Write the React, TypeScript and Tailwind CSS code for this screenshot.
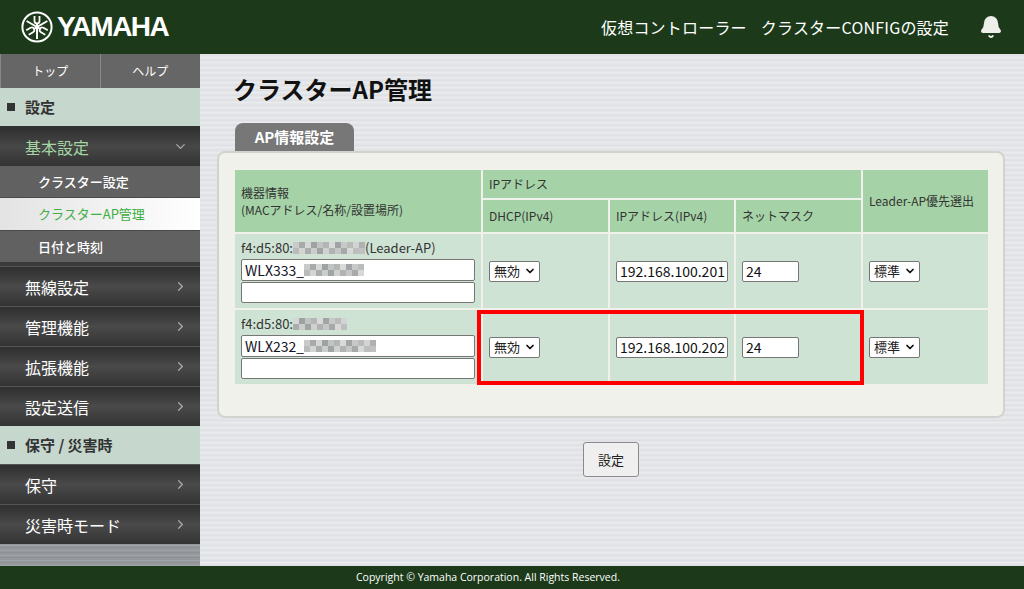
import { Bell, ChevronDown, ChevronRight } from "lucide-react";

const mosaicA = [
  "bg-[#c9cbca]", "bg-[#a7aaa9]", "bg-[#d6d6d4]", "bg-[#9da2a3]", "bg-[#c2c4c2]",
  "bg-[#b3b6b5]", "bg-[#d9dad8]", "bg-[#a0a4a6]", "bg-[#c7c9c8]", "bg-[#b9bcbb]",
  "bg-[#d2d3d2]", "bg-[#aeb1b0]",
];
const mosaicB = [
  "bg-[#b8bbba]", "bg-[#d4d5d3]", "bg-[#a9adad]", "bg-[#cbcdcc]", "bg-[#9fa4a5]",
  "bg-[#d0d1cf]", "bg-[#b0b3b2]", "bg-[#c5c7c6]", "bg-[#a5a9aa]", "bg-[#d8d9d7]",
  "bg-[#bcbfbe]", "bg-[#c0c2c1]",
];

function Mosaic({ n, offset = 0 }: { n: number; offset?: number }) {
  return (
    <span className="inline-flex flex-col align-middle">
      <span className="flex">
        {mosaicA.slice(offset, offset + n).map((c, i) => (
          <span key={i} className={`h-[6px] w-[6px] ${c}`} />
        ))}
      </span>
      <span className="flex">
        {mosaicB.slice(offset, offset + n).map((c, i) => (
          <span key={i} className={`h-[6px] w-[6px] ${c}`} />
        ))}
      </span>
    </span>
  );
}

function Logo() {
  const fork = (
    <g>
      <line x1="16" y1="16" x2="16" y2="28" stroke="white" strokeWidth="2" />
      <path d="M13.5 5 V10 Q13.5 12.5 16 12.5 Q18.5 12.5 18.5 10 V5" fill="none" stroke="white" strokeWidth="1.8" />
      <line x1="16" y1="12.5" x2="16" y2="16" stroke="white" strokeWidth="2" />
    </g>
  );
  return (
    <svg width="32" height="32" viewBox="0 0 32 32">
      <circle cx="16" cy="16" r="14.6" fill="none" stroke="white" strokeWidth="2" />
      {fork}
      <g transform="rotate(120 16 16)">{fork}</g>
      <g transform="rotate(240 16 16)">{fork}</g>
      <circle cx="16" cy="16" r="2" fill="white" />
    </svg>
  );
}

function MenuItem({ label }: { label: string }) {
  return (
    <div className="flex h-[40px] items-center justify-between border-t border-[#555] bg-gradient-to-b from-[#2f2f2f] via-[#4a4a4a] to-[#333] pl-[25px] pr-[12px] text-[16px] text-white">
      <span>{label}</span>
      <ChevronRight size={15} className="text-[#a8a8a8]" />
    </div>
  );
}

function Section({ label }: { label: string }) {
  return (
    <div className="flex h-[38px] items-center gap-[10px] bg-[#c6d7cd] pl-[7px] text-[15px] font-bold text-[#333]">
      <span className="h-[8px] w-[8px] bg-[#333]" />
      <span>{label}</span>
    </div>
  );
}

function Select({ label }: { label: string }) {
  return (
    <div className="inline-flex h-[21px] w-[51px] items-center justify-between rounded-[2px] border border-[#767676] bg-white pl-[4px] pr-[3px] text-[13px] text-[#222]">
      <span>{label}</span>
      <ChevronDown size={12} strokeWidth={3.5} className="text-[#111]" />
    </div>
  );
}

function TextBox({ w, children }: { w: string; children?: React.ReactNode }) {
  return (
    <div className={`flex h-[21px] items-center rounded-[2px] border border-[#767676] bg-white px-[3px] text-[14px] leading-none text-[#111] ${w}`}>
      {children}
    </div>
  );
}

function ApRow({ model, leader, mac }: { model: string; leader?: boolean; mac: number }) {
  return (
    <>
      <div className="bg-[#cfe3d5] px-[6px] pt-[6px]">
        <div className="flex h-[16px] items-center text-[13px] text-[#333]">
          <span>f4:d5:80:</span>
          <Mosaic n={mac} offset={leader ? 0 : 2} />
          {leader && <span>(Leader-AP)</span>}
        </div>
        <div className="mt-[3px] flex flex-col gap-[1px]">
          <div className="flex h-[22px] items-center rounded-[2px] border border-[#767676] bg-white px-[3px] text-[14px] text-[#112]">
            <span>{model}_</span>
            <Mosaic n={leader ? 10 : 12} offset={0} />
          </div>
          <TextBox w="w-full" />
        </div>
      </div>
      <div className="flex items-center bg-[#cfe3d5] px-[6px]">
        <Select label="無効" />
      </div>
      <div className="flex items-center bg-[#cfe3d5] px-[6px]">
        <TextBox w="w-[112px]">{leader ? "192.168.100.201" : "192.168.100.202"}</TextBox>
      </div>
      <div className="flex items-center bg-[#cfe3d5] px-[6px]">
        <TextBox w="w-[57px]">24</TextBox>
      </div>
      <div className="flex items-center bg-[#cfe3d5] px-[6px]">
        <Select label="標準" />
      </div>
    </>
  );
}

export default function App() {
  return (
    <div className="flex h-[589px] w-[1024px] flex-col overflow-hidden font-['Noto_Sans_CJK_JP','Noto_Sans',sans-serif]">
      {/* header */}
      <header className="flex h-[54px] shrink-0 items-center bg-[#1c3a1a] pl-[21px] pr-[21px] text-white">
        <div className="flex items-center gap-[4px]">
          <Logo />
          <span className="font-['Liberation_Sans',sans-serif] text-[28px] font-bold tracking-[-1.5px]">YAMAHA</span>
        </div>
        <nav className="ml-auto flex items-center gap-[14px] text-[16px] tracking-[0.2px]">
          <span>仮想コントローラー</span>
          <span>クラスターCONFIGの設定</span>
        </nav>
        <Bell size={24} fill="currentColor" className="ml-[30px] text-[#eeeeea]" />
      </header>

      <div className="flex min-h-0 flex-1">
        {/* sidebar */}
        <aside className="flex w-[200px] shrink-0 flex-col bg-[repeating-linear-gradient(180deg,#8f9297_0px,#a4a7ab_2px,#878a8f_3px,#9b9ea2_5px)]">
          <div className="grid h-[34px] grid-cols-2 border-l border-[#888] bg-[#666] text-[12px] text-white">
            <div className="flex items-center justify-center border-r border-[#8a8a8a]">トップ</div>
            <div className="flex items-center justify-center">ヘルプ</div>
          </div>
          <Section label="設定" />
          <div className="flex h-[40px] items-center justify-between border-t border-[#333] bg-gradient-to-b from-[#2f2f2f] via-[#474747] to-[#333] pl-[25px] pr-[12px] text-[16px] text-[#a3d6a3]">
            <span>基本設定</span>
            <ChevronDown size={15} className="text-[#a8a8a8]" />
          </div>
          <div className="flex h-[32px] items-center border-b border-[#4a4a4a] bg-[#616161] pl-[38px] text-[13px] font-medium text-white">クラスター設定</div>
          <div className="flex h-[32px] items-center bg-gradient-to-r from-[#e3e3e3] to-white pl-[38px] text-[13px] text-[#3fae44]">クラスターAP管理</div>
          <div className="flex h-[32px] items-center border-t border-[#4a4a4a] bg-[#616161] pl-[38px] text-[13px] font-medium text-white">日付と時刻</div>
          <div className="h-[4px] bg-[#3a3a3a]" />
          <MenuItem label="無線設定" />
          <MenuItem label="管理機能" />
          <MenuItem label="拡張機能" />
          <MenuItem label="設定送信" />
          <Section label="保守 / 災害時" />
          <MenuItem label="保守" />
          <MenuItem label="災害時モード" />
        </aside>

        {/* main */}
        <main className="flex-1 bg-[repeating-linear-gradient(180deg,#e4e6e9_0px,#dcdee2_2px,#eceef0_3px,#e1e3e6_5px)] pl-[17px] pr-[19px]">
          <h1 className="ml-[16px] pt-[19px] text-[24px] font-bold leading-[31px] text-[#111]">クラスターAP管理</h1>
          <div className="ml-[18px] mt-[19px] flex h-[28px] w-[119px] items-center justify-center rounded-t-[8px] bg-[#777] text-[15px] font-bold text-white">
            AP情報設定
          </div>
          <div className="rounded-[8px] border-2 border-[#d2d3cf] bg-[#f1f1ec] pb-[32px] pl-[16px] pr-[15px] pt-[17px]">
            <div className="relative grid grid-cols-[246px_125px_124px_125px_125px] grid-rows-[28px_32px_74px_74px] gap-[2px] text-[12px] text-[#333]">
              <div className="row-span-2 flex flex-col justify-center bg-[#a5d3a7] px-[6px] leading-[17px]">
                <span>機器情報</span>
                <span>(MACアドレス/名称/設置場所)</span>
              </div>
              <div className="col-span-3 flex items-center bg-[#a5d3a7] px-[6px]">IPアドレス</div>
              <div className="row-span-2 flex items-center bg-[#a5d3a7] px-[6px]">Leader-AP優先選出</div>
              <div className="flex items-center bg-[#a5d3a7] px-[6px]">DHCP(IPv4)</div>
              <div className="flex items-center bg-[#a5d3a7] px-[6px]">IPアドレス(IPv4)</div>
              <div className="flex items-center bg-[#a5d3a7] px-[6px]">ネットマスク</div>

              <ApRow model="WLX333" leader mac={12} />
              <ApRow model="WLX232" mac={9} />

              <div className="pointer-events-none absolute left-[242px] top-[140px] h-[75px] w-[387px] border-4 border-[#ff0000]" />
            </div>
          </div>
          <div className="mt-[24px] flex justify-center">
            <button className="h-[35px] w-[56px] rounded-[3px] border border-[#8a8a8a] bg-[#efefef] text-[13px] text-[#222]">設定</button>
          </div>
        </main>
      </div>

      {/* footer */}
      <footer className="flex h-[23px] shrink-0 items-center bg-[#1c3a1a] pl-[356px] font-['Open_Sans',sans-serif] text-[10.5px] text-white">
        Copyright © Yamaha Corporation. All Rights Reserved.
      </footer>
    </div>
  );
}
